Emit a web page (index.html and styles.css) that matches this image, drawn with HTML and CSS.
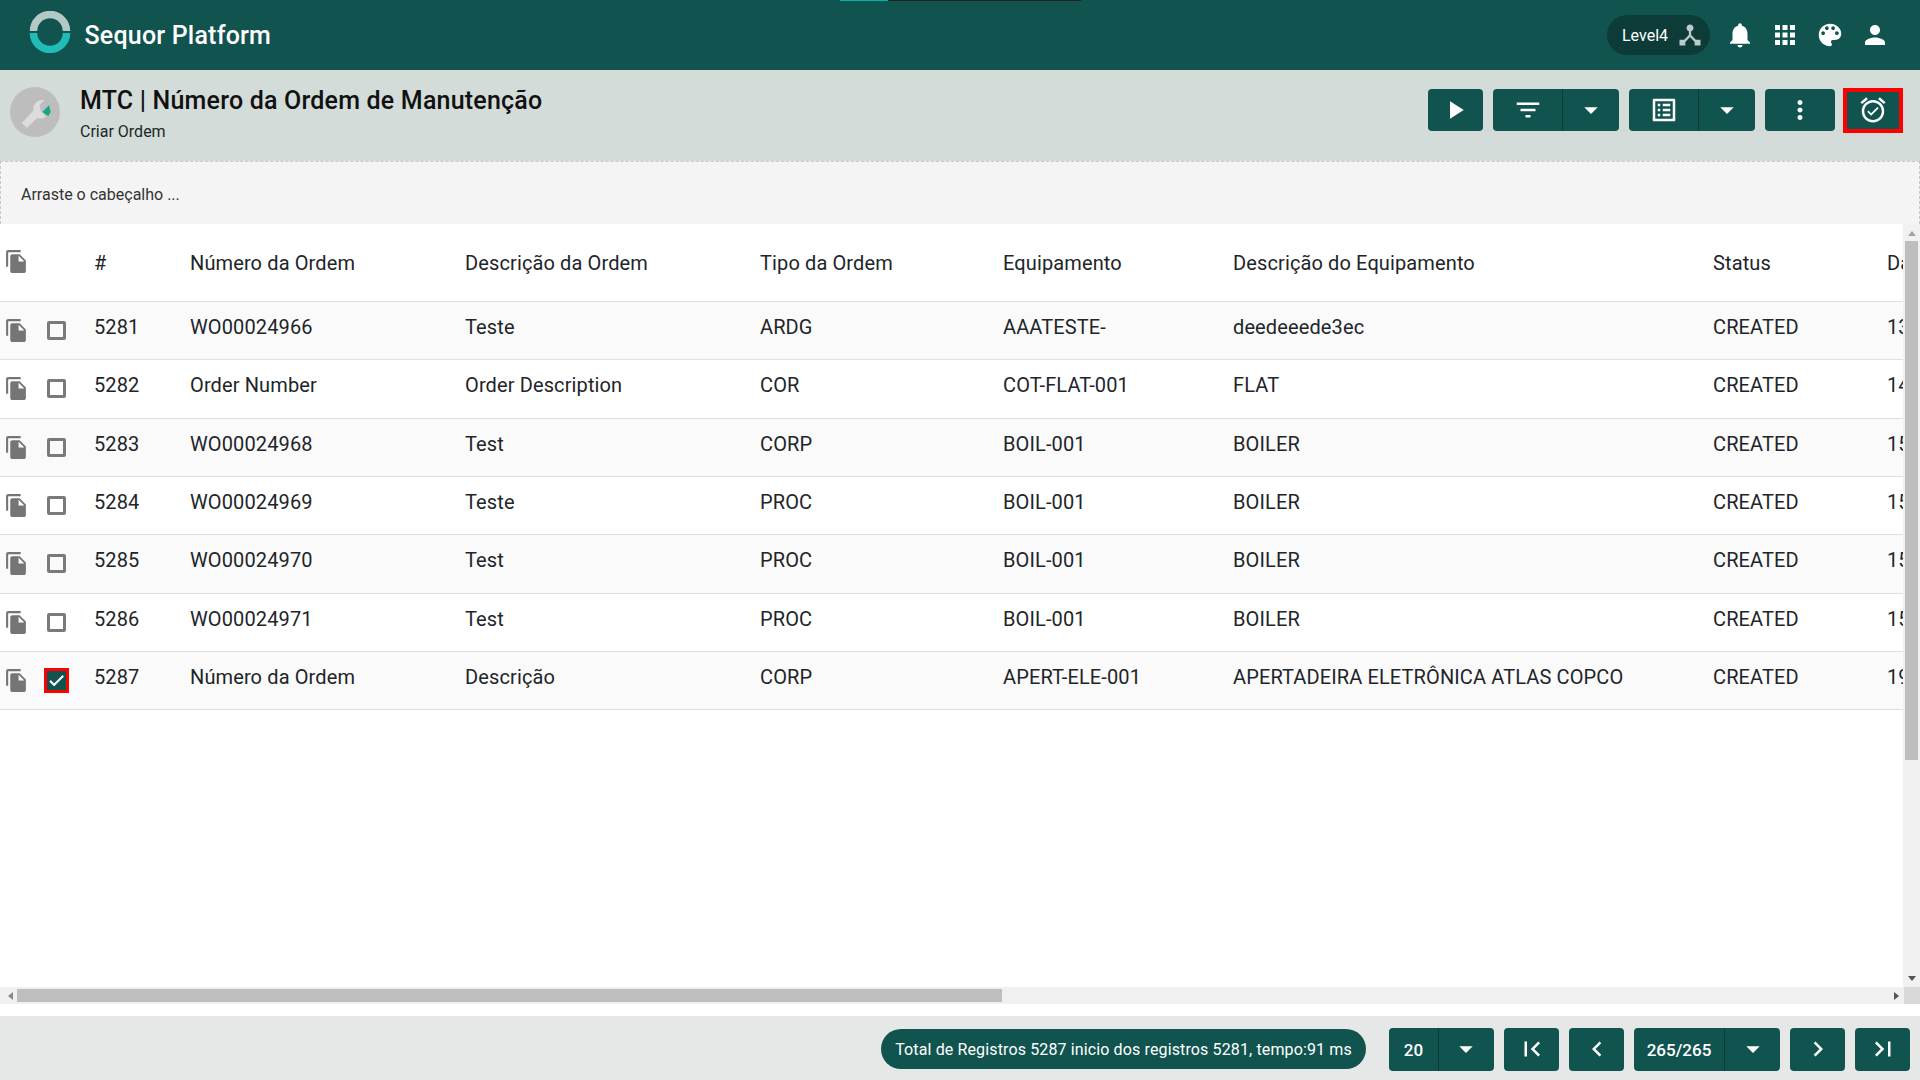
FILE: index.html
```html
<!DOCTYPE html>
<html lang="pt-BR">
<head>
  <meta charset="UTF-8" />
  <title>Sequor Platform</title>
  <link rel="stylesheet" href="styles.css">
</head>
<body>
  <svg class="sprite" xmlns="http://www.w3.org/2000/svg">
    <symbol id="i-play" viewBox="0 0 24 24"><path d="M8 5v14l11-7z"/></symbol>
    <symbol id="i-filter" viewBox="0 0 24 24"><path d="M10 18h4v-2h-4v2zM3 6v2h18V6H3zm3 7h12v-2H6v2z"/></symbol>
    <symbol id="i-drop" viewBox="0 0 24 24"><path d="M7 10l5 5 5-5z"/></symbol>
    <symbol id="i-list" viewBox="0 0 24 24"><path d="M19 5v14H5V5h14m1.1-2H3.9c-.5 0-.9.4-.9.9v16.2c0 .4.4.9.9.9h16.2c.4 0 .9-.5.9-.9V3.9c0-.5-.5-.9-.9-.9zM11 7h6v2h-6V7zm0 4h6v2h-6v-2zm0 4h6v2h-6zM7 7h2v2H7zm0 4h2v2H7zm0 4h2v2H7z"/></symbol>
    <symbol id="i-more" viewBox="0 0 24 24"><path d="M12 8c1.1 0 2-.9 2-2s-.9-2-2-2-2 .9-2 2 .9 2 2 2zm0 2c-1.1 0-2 .9-2 2s.9 2 2 2 2-.9 2-2-.9-2-2-2zm0 6c-1.1 0-2 .9-2 2s.9 2 2 2 2-.9 2-2-.9-2-2-2z"/></symbol>
    <symbol id="i-alarm" viewBox="0 0 24 24"><path d="M22 5.72l-4.6-3.86-1.29 1.53 4.6 3.86L22 5.72zM7.88 3.39L6.6 1.86 2 5.71l1.29 1.53 4.59-3.85zM12 4c-4.97 0-9 4.03-9 9s4.02 9 9 9c4.97 0 9-4.03 9-9s-4.03-9-9-9zm0 16c-3.87 0-7-3.13-7-7s3.13-7 7-7 7 3.13 7 7-3.13 7-7 7zm-1.46-5.47L8.41 12.4l-1.06 1.06 3.18 3.18 6-6-1.06-1.06-4.93 4.95z"/></symbol>
    <symbol id="i-bell" viewBox="0 0 24 24"><path d="M12 22c1.1 0 2-.9 2-2h-4c0 1.1.89 2 2 2zm6-6v-5c0-3.07-1.64-5.64-4.5-6.32V4c0-.83-.67-1.5-1.5-1.5s-1.5.67-1.5 1.5v.68C7.63 5.36 6 7.92 6 11v5l-2 2v1h16v-1l-2-2z"/></symbol>
    <symbol id="i-apps" viewBox="0 0 24 24"><path d="M4 8h4V4H4v4zm6 12h4v-4h-4v4zm-6 0h4v-4H4v4zm0-6h4v-4H4v4zm6 0h4v-4h-4v4zm6-10v4h4V4h-4zm-6 4h4V4h-4v4zm6 6h4v-4h-4v4zm0 6h4v-4h-4v4z"/></symbol>
    <symbol id="i-palette" viewBox="0 0 24 24"><path d="M12 3c-4.97 0-9 4.03-9 9s4.03 9 9 9c.83 0 1.5-.67 1.5-1.5 0-.39-.15-.74-.39-1.01-.23-.26-.38-.61-.38-.99 0-.83.67-1.5 1.5-1.5H16c2.76 0 5-2.24 5-5 0-4.42-4.03-8-9-8zm-5.5 9c-.83 0-1.5-.67-1.5-1.5S5.67 9 6.5 9 8 9.67 8 10.5 7.33 12 6.5 12zm3-4C8.67 8 8 7.33 8 6.5S8.67 5 9.5 5s1.5.67 1.5 1.5S10.33 8 9.5 8zm5 0c-.83 0-1.5-.67-1.5-1.5S13.67 5 14.5 5s1.5.67 1.5 1.5S15.33 8 14.5 8zm3 4c-.83 0-1.5-.67-1.5-1.5S16.67 9 17.5 9s1.5.67 1.5 1.5-.67 1.5-1.5 1.5z"/></symbol>
    <symbol id="i-person" viewBox="0 0 24 24"><path d="M12 12c2.21 0 4-1.79 4-4s-1.79-4-4-4-4 1.79-4 4 1.79 4 4 4zm0 2c-2.67 0-8 1.34-8 4v2h16v-2c0-2.66-5.33-4-8-4z"/></symbol>
    <symbol id="i-hub" viewBox="0 0 24 24"><path d="M17 16l-4-4V8.82C14.16 8.4 15 7.3 15 6c0-1.66-1.34-3-3-3S9 4.34 9 6c0 1.3.84 2.4 2 2.82V12l-4 4H3v5h5v-3.05l4-4.2 4 4.2V21h5v-5h-4z"/></symbol>
    <symbol id="i-copy" viewBox="0 0 24 24"><path d="M16 1H4c-1.1 0-2 .9-2 2v14h2V3h12V1zm-1 4l6 6v10c0 1.1-.9 2-2 2H7.99C6.89 23 6 22.1 6 21l.01-14c0-1.1.89-2 1.99-2h7zm-1 7h5.5L14 6.5V12z"/></symbol>
    <symbol id="i-first" viewBox="0 0 24 24"><path d="M18.41 16.59L13.82 12l4.59-4.59L17 6l-6 6 6 6zM6 6h2v12H6z"/></symbol>
    <symbol id="i-prev" viewBox="0 0 24 24"><path d="M15.41 7.41L14 6l-6 6 6 6 1.41-1.41L10.83 12z"/></symbol>
    <symbol id="i-next" viewBox="0 0 24 24"><path d="M10 6L8.59 7.41 13.17 12l-4.58 4.59L10 18l6-6z"/></symbol>
    <symbol id="i-last" viewBox="0 0 24 24"><path d="M5.59 7.41L10.18 12l-4.59 4.59L7 18l6-6-6-6zM16 6h2v12h-2z"/></symbol>
  </svg>

  <div class="loading-bar"><span class="loading-on"></span><span class="loading-off"></span></div>

  <header class="topbar">
    <svg class="logo" viewBox="0 0 42 42">
      <path class="logo-top" d="M4.5 20A16.5 16.5 0 0 1 37.5 20"/>
      <path class="logo-bottom" d="M4.5 22A16.5 16.5 0 0 0 37.5 22"/>
    </svg>
    <span class="brand">Sequor Platform</span>
    <div class="topbar-right">
      <div class="level-pill">
        <span>Level4</span>
        <svg class="icon-hub"><use href="#i-hub"/></svg>
      </div>
      <svg class="icon"><use href="#i-bell"/></svg>
      <svg class="icon"><use href="#i-apps"/></svg>
      <svg class="icon"><use href="#i-palette"/></svg>
      <svg class="icon"><use href="#i-person"/></svg>
    </div>
  </header>

  <section class="subheader">
    <div class="avatar">
      <svg viewBox="0 0 50 50">
        <path class="wrench" d="M11.7 36L23.5 23.5C22.5 17.5 27 12.5 34.5 13L29.5 18L31 24.5L36 29.5C33 32 29.5 32 27 31L17 41Z"/>
        <path class="wrench-mark" d="M32.3 25L39 18.3L40.7 25L38.3 29Z"/>
      </svg>
    </div>
    <div class="page-title">
      <h1>MTC | Número da Ordem de Manutenção</h1>
      <p>Criar Ordem</p>
    </div>
    <div class="toolbar">
      <button class="btn btn-play"><svg class="icon"><use href="#i-play"/></svg></button>
      <div class="btn-group">
        <button class="btn btn-main"><svg class="icon"><use href="#i-filter"/></svg></button>
        <button class="btn btn-caret"><svg class="icon-drop"><use href="#i-drop"/></svg></button>
      </div>
      <div class="btn-group">
        <button class="btn btn-main"><svg class="icon"><use href="#i-list"/></svg></button>
        <button class="btn btn-caret"><svg class="icon-drop"><use href="#i-drop"/></svg></button>
      </div>
      <button class="btn btn-more"><svg class="icon"><use href="#i-more"/></svg></button>
      <button class="btn btn-alarm"><svg class="icon"><use href="#i-alarm"/></svg></button>
    </div>
  </section>

  <div class="group-drop">Arraste o cabeçalho ...</div>

  <main class="grid-wrap">
    <div class="grid-top">
      <div class="grid">
        <div class="row row-head">
          <svg class="copy"><use href="#i-copy"/></svg>
          <span></span>
          <span>#</span>
          <span>Número da Ordem</span>
          <span>Descrição da Ordem</span>
          <span>Tipo da Ordem</span>
          <span>Equipamento</span>
          <span>Descrição do Equipamento</span>
          <span>Status</span>
          <span>Da</span>
        </div>
        <div class="row">
          <svg class="copy"><use href="#i-copy"/></svg>
          <span class="check"></span>
          <span>5281</span><span>WO00024966</span><span>Teste</span><span>ARDG</span><span>AAATESTE-</span><span>deedeeede3ec</span><span>CREATED</span><span>13</span>
        </div>
        <div class="row">
          <svg class="copy"><use href="#i-copy"/></svg>
          <span class="check"></span>
          <span>5282</span><span>Order Number</span><span>Order Description</span><span>COR</span><span>COT-FLAT-001</span><span>FLAT</span><span>CREATED</span><span>14</span>
        </div>
        <div class="row">
          <svg class="copy"><use href="#i-copy"/></svg>
          <span class="check"></span>
          <span>5283</span><span>WO00024968</span><span>Test</span><span>CORP</span><span>BOIL-001</span><span>BOILER</span><span>CREATED</span><span>15</span>
        </div>
        <div class="row">
          <svg class="copy"><use href="#i-copy"/></svg>
          <span class="check"></span>
          <span>5284</span><span>WO00024969</span><span>Teste</span><span>PROC</span><span>BOIL-001</span><span>BOILER</span><span>CREATED</span><span>15</span>
        </div>
        <div class="row">
          <svg class="copy"><use href="#i-copy"/></svg>
          <span class="check"></span>
          <span>5285</span><span>WO00024970</span><span>Test</span><span>PROC</span><span>BOIL-001</span><span>BOILER</span><span>CREATED</span><span>15</span>
        </div>
        <div class="row">
          <svg class="copy"><use href="#i-copy"/></svg>
          <span class="check"></span>
          <span>5286</span><span>WO00024971</span><span>Test</span><span>PROC</span><span>BOIL-001</span><span>BOILER</span><span>CREATED</span><span>15</span>
        </div>
        <div class="row">
          <svg class="copy"><use href="#i-copy"/></svg>
          <span class="check check-on"><svg viewBox="0 0 24 24"><path d="M9 16.2L4.8 12l-1.4 1.4L9 19 21 7l-1.4-1.4z"/></svg></span>
          <span>5287</span><span>Número da Ordem</span><span>Descrição</span><span>CORP</span><span>APERT-ELE-001</span><span>APERTADEIRA ELETRÔNICA ATLAS COPCO</span><span>CREATED</span><span>19</span>
        </div>
      </div>
      <div class="vscroll">
        <span class="arrow arrow-up"></span>
        <span class="vthumb"></span>
        <span class="arrow arrow-down"></span>
      </div>
    </div>
    <div class="hscroll">
      <span class="arrow arrow-left"></span>
      <span class="hthumb"></span>
      <span class="arrow arrow-right"></span>
      <span class="corner"></span>
    </div>
  </main>

  <footer class="pager">
    <div class="total-pill">Total de Registros 5287 inicio dos registros 5281, tempo:91 ms</div>
    <div class="btn-group page-size">
      <button class="btn btn-value">20</button>
      <button class="btn btn-caret"><svg class="icon-drop"><use href="#i-drop"/></svg></button>
    </div>
    <button class="btn btn-nav"><svg class="icon"><use href="#i-first"/></svg></button>
    <button class="btn btn-nav"><svg class="icon"><use href="#i-prev"/></svg></button>
    <div class="btn-group page-num">
      <button class="btn btn-value">265/265</button>
      <button class="btn btn-caret"><svg class="icon-drop"><use href="#i-drop"/></svg></button>
    </div>
    <button class="btn btn-nav"><svg class="icon"><use href="#i-next"/></svg></button>
    <button class="btn btn-nav"><svg class="icon"><use href="#i-last"/></svg></button>
  </footer>
</body>
</html>
```

FILE: styles.css
```css
:root {
  --primary: #11544f;
  --primary-dark: #0d3b38;
  --surface: #d3dcd9;
  --text: #212529;
  --border: #e0e0e0;
  --muted: #757575;
}

* {
  box-sizing: border-box;
  margin: 0;
  padding: 0;
}

body {
  font-family: Roboto, "Liberation Sans", sans-serif;
  color: var(--text);
  background: #fff;
  display: flex;
  flex-direction: column;
  height: 100vh;
  overflow: hidden;
}

.sprite {
  display: none;
}

svg {
  fill: currentColor;
  display: block;
  flex: none;
}

/* Loading bar over the header */
.loading-bar {
  position: absolute;
  top: 0;
  left: 840px;
  display: flex;
  height: 1px;
}

.loading-on {
  width: 48px;
  background: #00b5ad;
}

.loading-off {
  width: 193px;
  background: #222;
}

/* Top bar */
.topbar {
  height: 70px;
  flex: none;
  background: var(--primary);
  color: #fff;
  display: flex;
  align-items: center;
  padding: 0 30px 0 28.5px;
}

.logo {
  width: 42px;
  height: 42px;
  fill: none;
  stroke-width: 7.5;
  margin-top: -6px;
}

.logo-top {
  stroke: #b4c8c5;
}

.logo-bottom {
  stroke: #20bdb7;
}

.brand {
  font-size: 25px;
  font-weight: 500;
  letter-spacing: .2px;
  margin-left: 14px;
}

.topbar-right {
  margin-left: auto;
  display: flex;
  align-items: center;
  gap: 15px;
}

.icon {
  width: 30px;
  height: 30px;
}

.level-pill {
  width: 103px;
  height: 40px;
  border-radius: 20px;
  background: var(--primary-dark);
  display: flex;
  align-items: center;
  padding-left: 15px;
  font-size: 16px;
  gap: 8px;
}

.icon-hub {
  width: 28px;
  height: 28px;
  color: #bccac8;
}

/* Page header */
.subheader {
  height: 91px;
  flex: none;
  background: var(--surface);
  display: flex;
  padding: 17px 17px 0 10px;
}

.avatar {
  width: 50px;
  height: 50px;
  border-radius: 50%;
  background: #bdbdbd;
}

.wrench {
  fill: #dcdcdc;
}

.wrench-mark {
  fill: #12a68a;
}

.page-title {
  margin-left: 20px;
}

.page-title h1 {
  font-size: 25px;
  font-weight: 500;
  letter-spacing: .2px;
  line-height: 28px;
  color: #111;
}

.page-title p {
  font-size: 16px;
  line-height: 18px;
  margin-top: 8px;
}

.toolbar {
  margin-left: auto;
  display: flex;
  align-items: flex-start;
  gap: 10px;
  padding-top: 2px;
}

.btn {
  border: none;
  background: var(--primary);
  color: #fff;
  border-radius: 4px;
  height: 42px;
  display: flex;
  align-items: center;
  justify-content: center;
  font-family: inherit;
}

.btn-play {
  width: 55px;
  padding-right: 2px;
}

.btn-more {
  width: 70px;
}

.btn-alarm {
  width: 60px;
  height: 45px;
  margin: -1px 0 0 -2px;
  border: 4px solid #f00;
  border-radius: 0;
  padding-bottom: 2px;
}

.btn-group {
  display: flex;
  width: 126px;
}

.btn-group .btn {
  border-radius: 0;
}

.btn-group .btn:first-child {
  border-radius: 4px 0 0 4px;
  border-right: 1px solid var(--primary-dark);
}

.btn-group .btn:last-child {
  border-radius: 0 4px 4px 0;
}

.btn-main {
  width: 70px;
}

.btn-caret {
  flex: 1;
}

.icon-drop {
  width: 32px;
  height: 32px;
}

/* Group drop area */
.group-drop {
  height: 63px;
  flex: none;
  background: #f4f4f4;
  border: 1px dashed #c8c8c8;
  border-bottom: none;
  padding-left: 20px;
  font-size: 16px;
  line-height: 65px;
  color: #333;
}

/* Grid */
.grid-wrap {
  flex: 1;
  min-height: 0;
  display: flex;
  flex-direction: column;
}

.grid-top {
  flex: 1;
  min-height: 0;
  display: flex;
}

.grid {
  flex: 1;
  min-width: 0;
  overflow: hidden;
}

.row {
  display: grid;
  grid-template-columns: 47px 47px 96px 275px 295px 243px 230px 480px 174px 60px;
  align-items: center;
  width: 2147px;
  height: 58.33px;
  border-bottom: 1px solid var(--border);
  font-size: 20px;
  letter-spacing: .12px;
  padding-bottom: 7px;
}

.row:nth-child(even) {
  background: #fafafa;
}

.row-head {
  height: 78px;
  padding-bottom: 0;
}

.row-head span {
  margin-top: 1px;
}

.row-head .copy {
  margin-top: -2px;
}

.copy {
  width: 25px;
  height: 25px;
  margin: 7px 0 0 4px;
  color: var(--muted);
}

.check {
  width: 19px;
  height: 19px;
  border: 3px solid #7a7a7a;
  border-radius: 2px;
  margin-top: 7px;
}

.check-on {
  width: 25px;
  height: 25px;
  margin-left: -3px;
  border: 3px solid #f00;
  border-radius: 0;
  background: var(--primary);
  color: #fff;
}

.check-on path {
  stroke: #fff;
  stroke-width: 1;
}

/* Scrollbars */
.vscroll {
  width: 17px;
  flex: none;
  background: #f1f1f1;
  display: flex;
  flex-direction: column;
  align-items: center;
}

.vthumb {
  width: 13px;
  height: 519px;
  background: #bebebe;
}

.hscroll {
  height: 17px;
  flex: none;
  background: #f0f0f0;
  display: flex;
  align-items: center;
}

.hthumb {
  width: 985px;
  height: 13px;
  background: #bebebe;
}

.corner {
  width: 16px;
  height: 17px;
  background: #d9d9d9;
}

.arrow {
  width: 0;
  height: 0;
  border: 4px solid transparent;
}

.arrow-up {
  border-bottom: 5px solid #a3a3a3;
  border-top: none;
  margin: 7px 0 5px;
}

.arrow-down {
  border-top: 5px solid #555;
  border-bottom: none;
  margin: auto 0 6px;
}

.arrow-left {
  border-right: 5px solid #888;
  border-left: none;
  margin: 0 4px 0 8px;
}

.arrow-right {
  border-left: 5px solid #555;
  border-right: none;
  margin: 0 5px 0 auto;
}

/* Pager */
.pager {
  height: 64px;
  flex: none;
  margin-top: 12px;
  background: #e6e8e7;
  display: flex;
  align-items: center;
  justify-content: flex-end;
  gap: 10px;
  padding: 2px 10px 0 0;
}

.pager .btn {
  height: 43px;
}

.total-pill {
  width: 485px;
  height: 40px;
  margin-right: 13px;
  border-radius: 20px;
  background: var(--primary);
  color: #fff;
  font-size: 16px;
  letter-spacing: .13px;
  line-height: 42px;
  text-align: center;
}

.btn-value {
  font-size: 17px;
  font-weight: 500;
  padding-top: 1px;
}

.page-size {
  width: 105px;
}

.page-size .btn-value {
  width: 50px;
}

.page-size .btn-caret {
  padding-right: 2px;
}

.page-num {
  width: 146px;
}

.page-num .btn-value {
  width: 91px;
}

.btn-nav {
  width: 55px;
}
```
